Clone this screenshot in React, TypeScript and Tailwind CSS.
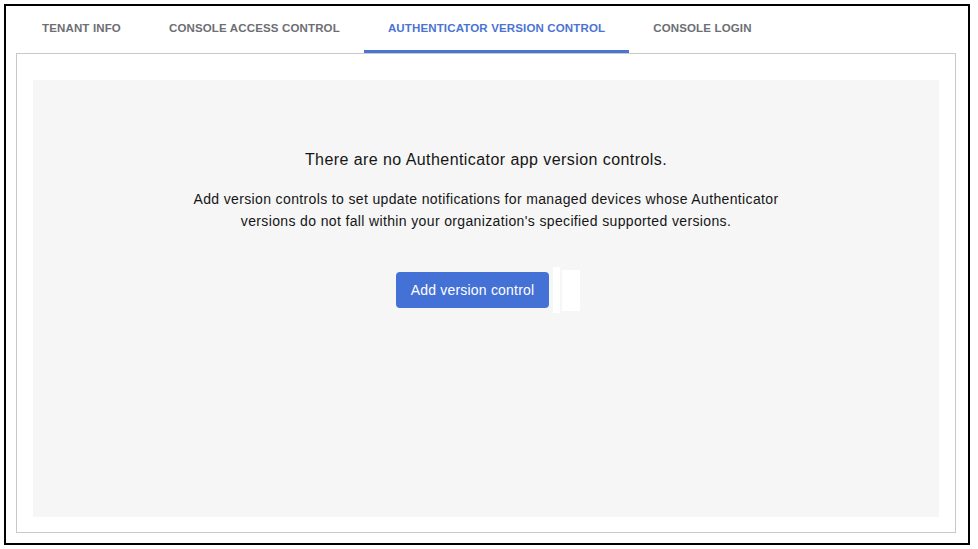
export default function App() {
  const tabs = [
    "Tenant Info",
    "Console Access Control",
    "Authenticator Version Control",
    "Console Login",
  ];
  const active = 2;

  return (
    <div className="h-[549px] w-[978px] bg-white p-[4px] pr-[8px] pb-[4px] font-['Liberation_Sans',Arial,sans-serif]">
      <div className="flex h-full flex-col border-2 border-black pl-[10px] pr-[12px] pb-[10px]">
        <div className="flex h-[47px] pl-[2px]">
          {tabs.map((t, i) => (
            <div
              key={t}
              className={`flex items-center border-b-[3px] px-6 pt-[1px] text-[11.5px] font-bold uppercase tracking-[0.15px] ${
                i === active
                  ? "border-[#4a74d4] text-[#4a74d4]"
                  : "border-transparent text-[#6d6e73]"
              }`}
            >
              {t}
            </div>
          ))}
        </div>
        <div className="flex flex-1 flex-col border border-[#c9c9c9] px-[16px] pt-[26px] pb-[15px]">
          <div className="flex flex-1 flex-col items-center bg-[#f6f6f6] pt-[68px] text-[#151515]">
            <h2 className="text-[16px] tracking-[0.43px]">
              There are no Authenticator app version controls.
            </h2>
            <p className="mt-[16px] max-w-[620px] text-center text-[14px] leading-[22px] tracking-[0.36px]">
              Add version controls to set update notifications for managed devices whose Authenticator
              versions do not fall within your organization's specified supported versions.
            </p>
            <div className="mt-[35px] ml-[4px] flex items-center">
              <button className="h-[36px] w-[153px] rounded-[4px] bg-[#4471d6] text-[14px] font-medium tracking-[0.2px] text-white">
                Add version control
              </button>
              <div className="ml-[4px] h-[46px] w-[7px] bg-white" />
              <div className="ml-[2px] h-[41px] w-[18px] bg-white" />
            </div>
          </div>
        </div>
      </div>
    </div>
  );
}
